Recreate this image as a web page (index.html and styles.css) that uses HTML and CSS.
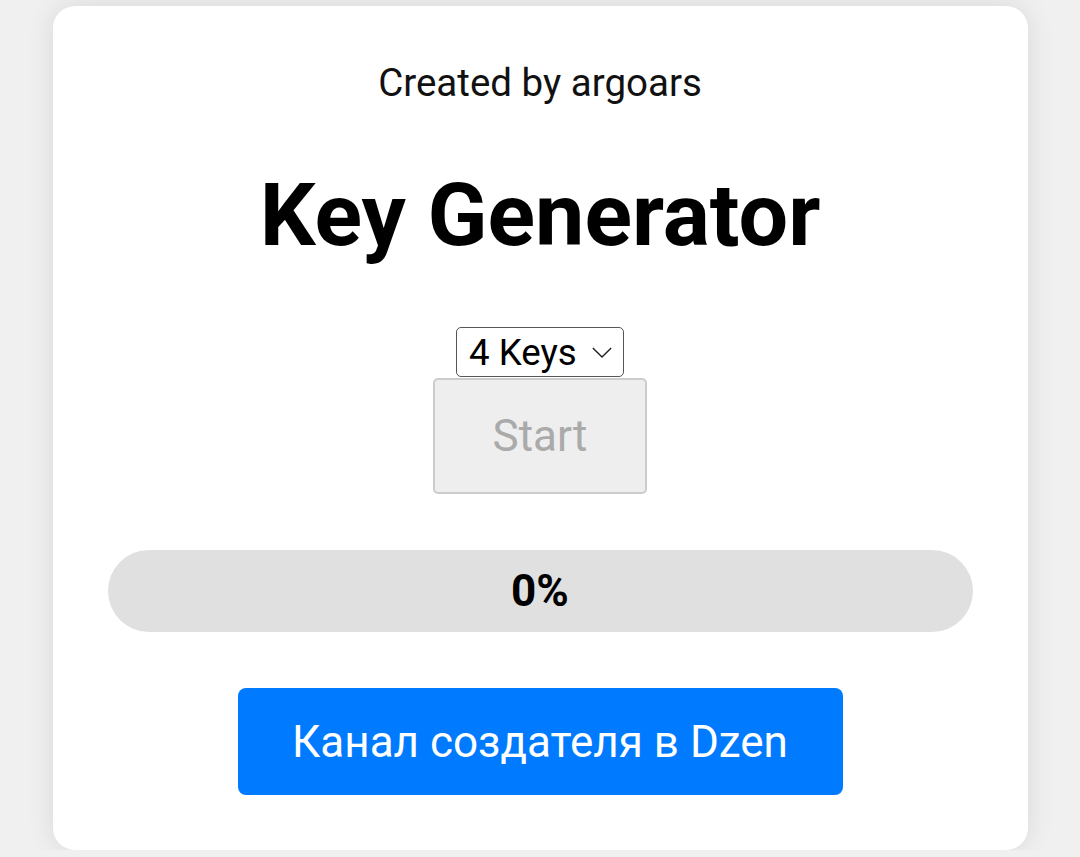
FILE: index.html
```html
<!DOCTYPE html>
<html lang="en">
<head>
  <meta charset="UTF-8" />
  <meta name="viewport" content="width=device-width, initial-scale=1.0" />
  <title>Key Generator</title>
  <link rel="stylesheet" href="styles.css">
</head>
<body>

  <div class="container">
    <p class="credit">Created by argoars</p>
    <h1>Key Generator</h1>

    <select id="keyCount" class="key-select">
      <option value="1">1 Key</option>
      <option value="2">2 Keys</option>
      <option value="4" selected>4 Keys</option>
      <option value="8">8 Keys</option>
    </select>
    <button id="startBtn" class="start-btn" disabled>Start</button>

    <div class="progress">
      <div class="progress-fill" style="width: 0%"></div>
      <span class="progress-text">0%</span>
    </div>

    <a class="channel-btn" href="#">Канал создателя в Dzen</a>
  </div>

</body>
</html>
```

FILE: styles.css
```css
body {
  font-family: Roboto, "Noto Sans", Arial, sans-serif;
  background-color: #f0f0f0;
  margin: 0;
  padding: 6px 0 0;
  display: flex;
  justify-content: center;
}

.container {
  width: 975px;
  box-sizing: border-box;
  background-color: #fff;
  border-radius: 22px;
  padding: 54px 55px 55px;
  box-shadow: 0 0 28px rgba(0, 0, 0, 0.1);
  display: flex;
  flex-direction: column;
  align-items: center;
  text-align: center;
}

.credit {
  font-size: 38.5px;
  color: #111;
  margin: 0;
  line-height: 45px;
}

h1 {
  font-size: 88px;
  font-weight: bold;
  color: #000;
  margin: 58px 0 0;
  line-height: 103px;
}

.key-select {
  margin-top: 61px;
  height: 50px;
  font-family: inherit;
  font-size: 36.7px;
  color: #000;
  background-color: #fff;
  border: 1.5px solid #555;
  border-radius: 5px;
  padding: 0 46px 0 12px;
  appearance: none;
  -webkit-appearance: none;
  background-image: url("data:image/svg+xml,%3Csvg xmlns='http://www.w3.org/2000/svg' width='24' height='14' viewBox='0 0 24 14'%3E%3Cpath d='M2 2l10 10 10-10' fill='none' stroke='%23222' stroke-width='1.6'/%3E%3C/svg%3E");
  background-repeat: no-repeat;
  background-position: right 10px center;
  background-size: 22px 13px;
}

.start-btn {
  width: 214px;
  height: 116px;
  margin-top: 1px;
  font-family: inherit;
  font-size: 44px;
  color: #aaa;
  background-color: #eee;
  border: 2px solid #ccc;
  border-radius: 5px;
}

.progress {
  position: relative;
  width: 100%;
  height: 82px;
  margin-top: 56px;
  background-color: #e0e0e0;
  border-radius: 41px;
  overflow: hidden;
  display: flex;
  align-items: center;
  justify-content: center;
}

.progress-fill {
  position: absolute;
  left: 0;
  top: 0;
  bottom: 0;
  background-color: #007bff;
}

.progress-text {
  position: relative;
  font-size: 44px;
  font-weight: bold;
  color: #000;
}

.channel-btn {
  margin-top: 56px;
  width: 605px;
  height: 107px;
  display: flex;
  align-items: center;
  justify-content: center;
  background-color: #007bff;
  color: #fff;
  font-size: 44px;
  text-decoration: none;
  border-radius: 8px;
}
```
